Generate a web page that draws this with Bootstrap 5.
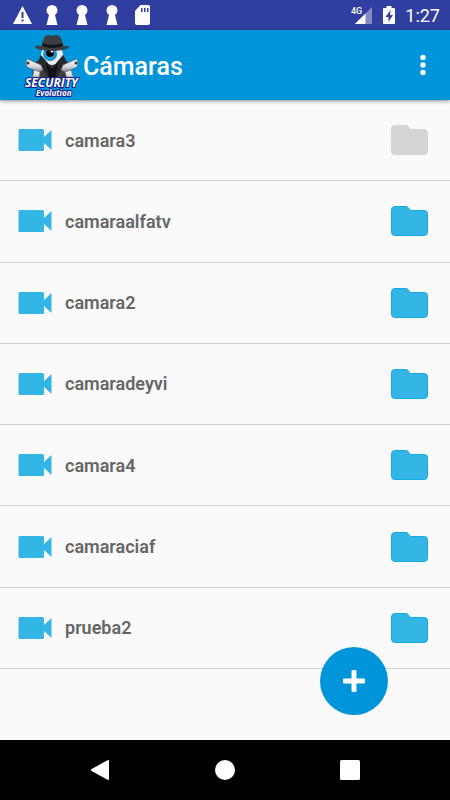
<!DOCTYPE html>
<html lang="es">
<head>
<meta charset="utf-8">
<meta name="viewport" content="width=device-width, initial-scale=1">
<title>Cámaras</title>
<link href="https://cdn.jsdelivr.net/npm/bootstrap@5.3.0/dist/css/bootstrap.min.css" rel="stylesheet">
<style>
  body { font-family: Roboto, "Noto Sans", sans-serif; background: #fafafa; }
  .status-bar { background: #303f9f; height: 30px; padding: 0 10px 0 13px; color: #fff; }
  .status-icons { gap: 10px; }
  .battery-icon { margin-left: 9px; }
  .status-time { font-size: 18px; line-height: 30px; margin-left: 9px; padding-top: 2px; }
  .app-bar { background: #0095db; height: 70px; padding: 0 11px 0 24px; box-shadow: 0 1px 4px rgba(0,0,0,.45); z-index: 1; }
  .app-title { font-size: 25px; font-weight: 500; line-height: 32px; margin-left: 3px; padding-top: 3px; }
  .more-btn { padding: 8px; line-height: 0; }
  .camera-area { padding-bottom: 71px; }
  .camera-row { border-bottom: 1px solid #d0d0d0; padding: 0 22px 0 18px; }
  .camera-name { font-size: 18px; font-weight: 600; line-height: 24px; color: #666; margin-left: 13px; padding-top: 1px; }
  .camera-icon, .folder-icon { fill: #33b5e5; }
  .folder-icon { stroke: #14a9e0; }
  .folder-btn:disabled { opacity: 1; }
  .folder-btn:disabled .folder-icon { fill: #d5d5d5; stroke: #d5d5d5; }
  .add-btn { width: 68px; height: 68px; right: 62px; bottom: 25px; background: #0095db; }
  .nav-keys { background: #000; height: 60px; padding: 0 75px; }
  .nav-keys button { width: 50px; line-height: 0; }
  .logo-main { font: italic 700 12px "Open Sans", sans-serif; }
  .logo-sub { font: italic 700 8px "Open Sans", sans-serif; }
</style>
<script src="https://cdn.jsdelivr.net/npm/bootstrap@5.3.0/dist/js/bootstrap.bundle.min.js" defer></script>
</head>
<body class="d-flex flex-column vh-100 m-0">
<svg class="d-none" aria-hidden="true">
  <symbol id="keyhole" viewBox="0 0 20 20"><path d="M10 0a5.500 5.500 0 0 0-5.500 5.500q0 2.500 2.500 4.500L4.500 20h11L13 10q2.500-2 2.500-4.500A5.500 5.500 0 0 0 10 0z"/></symbol>
  <symbol id="camera" viewBox="0 0 34 24"><path d="M1.500 1h23q1.500 0 1.500 1.500V9l7.500-7v20L26 15v6.500q0 1.500-1.500 1.500h-23Q.5 23 .5 21.500v-19Q.5 1 1.500 1z"/></symbol>
  <symbol id="folder" viewBox="0 0 37 30"><path d="M4 .5h12l3.500 4H33q3.500 0 3.500 3V26q0 3.500-3.500 3.500H4Q.5 29.500.5 26V4Q.5.5 4 .5z"/></symbol>
</svg>
<div class="status-bar d-flex align-items-center flex-shrink-0">
  <div class="status-icons d-flex align-items-center">
    <svg width="19" height="20" viewBox="0 0 19 20" fill="#fff" aria-hidden="true"><path d="M9.500 1 19 19H0zM8.500 7v6h2V7zm0 7.500v2h2v-2z" fill-rule="evenodd"/></svg>
    <svg width="20" height="20" fill="#fff" aria-hidden="true"><use href="#keyhole"/></svg>
    <svg width="20" height="20" fill="#fff" aria-hidden="true"><use href="#keyhole"/></svg>
    <svg width="20" height="20" fill="#fff" aria-hidden="true"><use href="#keyhole"/></svg>
    <svg width="20" height="20" viewBox="0 0 20 20" fill="#fff" aria-hidden="true"><path fill-rule="evenodd" d="M8.500 0H16q2 0 2 2v16q0 2-2 2H5q-2 0-2-2V6zM9 3v4h1.500V3zm3 0v4h1.500V3zm3 0v4h1.500V3z"/></svg>
  </div>
  <svg class="ms-auto" width="23" height="20" viewBox="0 0 23 20" aria-label="4G"><path d="M22 2v17H5z" fill="#fff" opacity=".4"/><path d="M15.500 8.500V19H5z" fill="#fff"/><text x="1" y="9" fill="#fff" font-size="9" font-weight="500">4G</text></svg>
  <svg class="battery-icon" width="14" height="20" viewBox="0 0 14 20" aria-hidden="true"><path d="M4.500 1h5v2H12q1 0 1 1v14q0 1-1 1H2q-1 0-1-1V4q0-1 1-1h2.500z" fill="#fff"/><path d="M8.500 5 3.500 12h3v5l4.500-7H8z" fill="#303f9f"/></svg>
  <span class="status-time">1:27</span>
</div>
<header class="app-bar d-flex align-items-center flex-shrink-0 position-relative text-white">
  <svg width="56" height="68" viewBox="24 31 56 68" role="img" aria-label="Security Evolution">
    <defs>
      <linearGradient id="metal" x2="0" y2="1"><stop offset="0" stop-color="#fff"/><stop offset=".6" stop-color="#d3d6d9"/><stop offset="1" stop-color="#7d8288"/></linearGradient>
      <radialGradient id="iris"><stop offset="0" stop-color="#39cbf7"/><stop offset="1" stop-color="#0a8bd0"/></radialGradient>
    </defs>
    <path d="M33 64q8-7 18-7t19 7l2 16H32z" fill="#3a3c40"/>
    <ellipse cx="52" cy="55" rx="11" ry="10" fill="#e9edef"/>
    <circle cx="50" cy="54" r="7" fill="url(#iris)"/><circle cx="50" cy="53" r="4" fill="#05090c"/><circle cx="52" cy="51" r="1.500" fill="#fff"/>
    <path d="m41 55-3 7 11 17 3-11zM63 55l4 7-12 17-3-11z" fill="#26282b"/>
    <path d="m46 63 6 6 6-6-3 16h-6z" fill="#111315"/>
    <path d="M42 46q1-11 6-11 4 1 8 0 6 0 7 11l6 0q0 3-7 4-11 2-20 0-7-1-7-4 2-1 7 0z" fill="#3d3e42"/>
    <path d="M42 43q10 4 21 0v3q-10 4-21 0z" fill="#141518"/>
    <g stroke="#686d72" stroke-width=".6">
      <path d="m27 59 14 6 2 5-4 2-12-5-1-4z" fill="url(#metal)"/><path d="m34 70 6 2-1 7h-7z" fill="url(#metal)"/>
      <path d="m77 59-14 6-2 5 4 2 12-5 1-4z" fill="url(#metal)"/><path d="m71 70-6 2 2 7h7z" fill="url(#metal)"/>
    </g>
    <circle cx="28" cy="63" r="1.500" fill="#303338"/><circle cx="76" cy="63" r="1.500" fill="#303338"/>
    <g fill="#fff" stroke="#16208d" stroke-width="2" paint-order="stroke" stroke-linejoin="round"><text class="logo-main" x="25" y="87">SECURITY</text><text class="logo-sub" x="36" y="96">Evolution</text></g>
  </svg>
  <h1 class="app-title mb-0">Cámaras</h1>
  <button class="more-btn btn border-0 ms-auto" type="button" aria-label="Más opciones"><svg width="16" height="24" viewBox="0 0 16 24" fill="#fff"><circle cx="8" cy="4.500" r="2.700"/><circle cx="8" cy="12" r="2.700"/><circle cx="8" cy="19.500" r="2.700"/></svg></button>
</header>
<main class="camera-area d-flex flex-column flex-fill position-relative">
  <ul class="list-unstyled d-flex flex-column flex-fill mb-0">
    <li class="camera-row d-flex align-items-center flex-fill"><svg class="camera-icon" width="34" height="24"><use href="#camera"/></svg><span class="camera-name">camara3</span><button class="folder-btn btn p-0 border-0 lh-1 ms-auto" type="button" disabled aria-label="Carpeta de camara3"><svg class="folder-icon" width="37" height="30"><use href="#folder"/></svg></button></li>
    <li class="camera-row d-flex align-items-center flex-fill"><svg class="camera-icon" width="34" height="24"><use href="#camera"/></svg><span class="camera-name">camaraalfatv</span><button class="folder-btn btn p-0 border-0 lh-1 ms-auto" type="button" aria-label="Carpeta de camaraalfatv"><svg class="folder-icon" width="37" height="30"><use href="#folder"/></svg></button></li>
    <li class="camera-row d-flex align-items-center flex-fill"><svg class="camera-icon" width="34" height="24"><use href="#camera"/></svg><span class="camera-name">camara2</span><button class="folder-btn btn p-0 border-0 lh-1 ms-auto" type="button" aria-label="Carpeta de camara2"><svg class="folder-icon" width="37" height="30"><use href="#folder"/></svg></button></li>
    <li class="camera-row d-flex align-items-center flex-fill"><svg class="camera-icon" width="34" height="24"><use href="#camera"/></svg><span class="camera-name">camaradeyvi</span><button class="folder-btn btn p-0 border-0 lh-1 ms-auto" type="button" aria-label="Carpeta de camaradeyvi"><svg class="folder-icon" width="37" height="30"><use href="#folder"/></svg></button></li>
    <li class="camera-row d-flex align-items-center flex-fill"><svg class="camera-icon" width="34" height="24"><use href="#camera"/></svg><span class="camera-name">camara4</span><button class="folder-btn btn p-0 border-0 lh-1 ms-auto" type="button" aria-label="Carpeta de camara4"><svg class="folder-icon" width="37" height="30"><use href="#folder"/></svg></button></li>
    <li class="camera-row d-flex align-items-center flex-fill"><svg class="camera-icon" width="34" height="24"><use href="#camera"/></svg><span class="camera-name">camaraciaf</span><button class="folder-btn btn p-0 border-0 lh-1 ms-auto" type="button" aria-label="Carpeta de camaraciaf"><svg class="folder-icon" width="37" height="30"><use href="#folder"/></svg></button></li>
    <li class="camera-row d-flex align-items-center flex-fill"><svg class="camera-icon" width="34" height="24"><use href="#camera"/></svg><span class="camera-name">prueba2</span><button class="folder-btn btn p-0 border-0 lh-1 ms-auto" type="button" aria-label="Carpeta de prueba2"><svg class="folder-icon" width="37" height="30"><use href="#folder"/></svg></button></li>
  </ul>
  <button class="add-btn btn border-0 rounded-circle p-0 lh-1 position-absolute" type="button" aria-label="Añadir cámara"><svg width="22" height="22" viewBox="0 0 22 22" fill="#fff"><path d="M9.500 0h3q1 0 1 1v7.500H21q1 0 1 1v3q0 1-1 1h-7.500V21q0 1-1 1h-3q-1 0-1-1v-7.500H1q-1 0-1-1v-3q0-1 1-1h7.500V1q0-1 1-1z"/></svg></button>
</main>
<nav class="nav-keys d-flex align-items-center justify-content-between flex-shrink-0" aria-label="Sistema">
  <button class="btn border-0 p-0" type="button" aria-label="Atrás"><svg width="20" height="20" viewBox="0 0 20 20" fill="#fff"><path d="M19 1v18q0 1.500-1.500.7L1.600 11q-1.200-1 0-2L17.500.3Q19-.5 19 1z"/></svg></button>
  <button class="btn border-0 p-0" type="button" aria-label="Inicio"><svg width="20" height="20" viewBox="0 0 20 20" fill="#fff"><circle cx="10" cy="10" r="10"/></svg></button>
  <button class="btn border-0 p-0" type="button" aria-label="Recientes"><svg width="20" height="20" viewBox="0 0 20 20" fill="#fff"><rect width="20" height="20" rx="1.500"/></svg></button>
</nav>
</body>
</html>
